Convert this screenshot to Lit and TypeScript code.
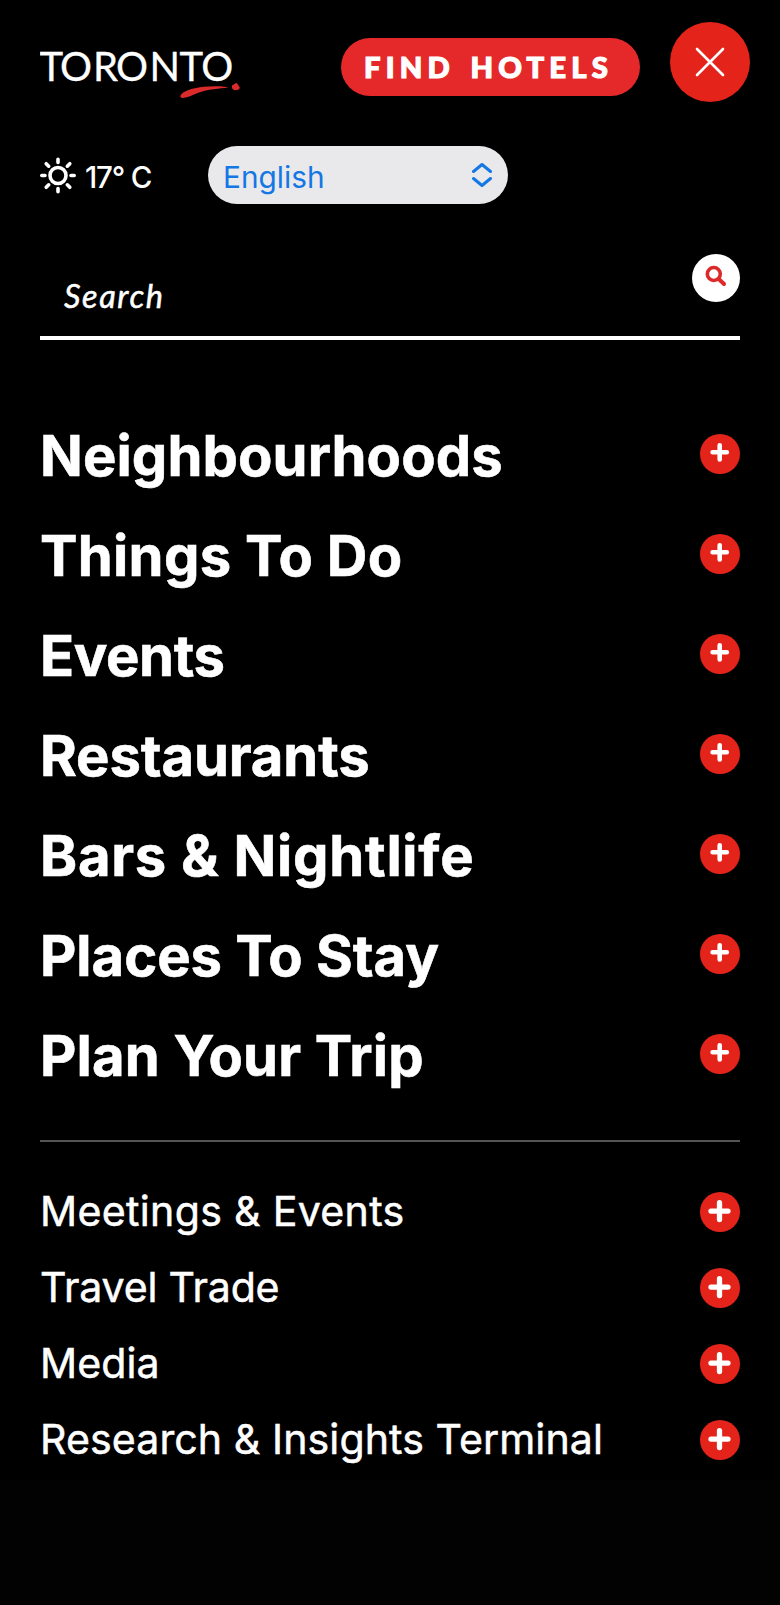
import { LitElement, html, css } from "lit";

type Entry = { label: string; spacing: number };

const primary: Entry[] = [
  { label: "Neighbourhoods", spacing: 0.1 },
  { label: "Things To Do", spacing: 0.3 },
  { label: "Events", spacing: -0.4 },
  { label: "Restaurants", spacing: -0.13 },
  { label: "Bars & Nightlife", spacing: 0.72 },
  { label: "Places To Stay", spacing: -0.04 },
  { label: "Plan Your Trip", spacing: 0.17 },
];

const secondary: Entry[] = [
  { label: "Meetings & Events", spacing: 0.32 },
  { label: "Travel Trade", spacing: -0.2 },
  { label: "Media", spacing: 0.1 },
  { label: "Research & Insights Terminal", spacing: 0.09 },
];

class ExpandButton extends LitElement {
  static properties = { large: { type: Boolean } };
  declare large: boolean;
  static styles = css`
    :host { display: block; flex: none; width: 40px; height: 40px; }
    svg { display: block; }
  `;
  render() {
    return html`<svg width="40" height="40" viewBox="0 0 40 40">
      <circle cx="20" cy="20" r="20" fill="#e4241b" />
      ${this.large
        ? html`<svg><path d="M19.5 10.6v17M11 19.1h17" stroke="#fff" stroke-width="5.3" stroke-linecap="round" /></svg>`
        : html`<svg><path d="M19.7 11.200v14.200M12.6 18.3h14.2" stroke="#fff" stroke-width="4.6" stroke-linecap="round" /></svg>`}
    </svg>`;
  }
}
customElements.define("expand-button", ExpandButton);

class AppRoot extends LitElement {
  static styles = css`
    :host {
      display: block;
      box-sizing: border-box;
      height: 1605px;
      overflow: hidden;
      background: #020202;
      color: #fff;
      font-family: Inter, "Liberation Sans", sans-serif;
    }
    .menu { box-sizing: border-box; height: 1480px; background: #000; padding: 22px 40px 0; }
    header { display: flex; height: 80px; margin-right: -10px; }
    .logo { display: block; width: 210px; height: 74px; margin-top: 8px; }
    .logo text { font: 400 40px Lato, sans-serif; fill: #fff; stroke: #fff; stroke-width: 0.3px; }
    .hotels {
      box-sizing: border-box; width: 299px; height: 58px; margin: 16px 0 0 91px;
      padding-left: 23px; border-radius: 29px; background: #e5292b;
      font: 900 29.2px/58px Lato, sans-serif; letter-spacing: 5.2px; word-spacing: 3.4px; white-space: nowrap;
      -webkit-text-stroke: 1.2px #fff;
    }
    .close { display: block; margin-left: auto; }
    .tools { display: flex; align-items: center; height: 58px; margin-top: 44px; }
    .sun { display: block; margin: 0 0 0 -1px; }
    .temp { width: 123px; margin-left: 8px; padding-top: 4px; font-size: 29.5px; font-weight: 500; line-height: 58px; letter-spacing: -1.2px; white-space: nowrap; }
    .language {
      box-sizing: border-box; display: flex; align-items: center; justify-content: space-between;
      width: 300px; height: 58px; padding: 0 16px 0 15px; border-radius: 29px;
      background: #e9e9eb; color: #1477e4; font-size: 29.8px; line-height: 58px;
    }
    .language span { padding-top: 4px; }
    .search { display: flex; justify-content: space-between; height: 82px; margin-top: 50px; border-bottom: 4px solid #fff; }
    .search span { padding-left: 24px; font: italic 400 32.5px/84px Lato, sans-serif; letter-spacing: 1.6px; -webkit-text-stroke: 0.5px #fff; }
    .search svg { display: block; }
    .primary { margin-top: 64px; display: flex; flex-direction: column; }
    .item { display: flex; align-items: center; justify-content: space-between; white-space: nowrap; }
    .primary .item { height: 100px; font-size: 56.2px; font-weight: 700; line-height: 100px; -webkit-text-stroke: 0.6px #fff; }
    .primary span { padding-top: 3px; }
    .secondary { margin-top: 36px; padding-top: 32px; border-top: 2px solid #555; }
    .secondary .item { height: 76px; font-size: 41.1px; font-weight: 400; line-height: 74px; -webkit-text-stroke: 0.5px #fff; }
    .secondary span { padding-bottom: 2px; }
  `;

  item(e: Entry, large: boolean) {
    return html`<div class="item">
      <span style="letter-spacing:${e.spacing}px">${e.label}</span>
      <expand-button ?large=${large}></expand-button>
    </div>`;
  }

  render() {
    return html`<div class="menu">
      <header>
        <svg class="logo" viewBox="40 30 210 74">
          <text x="39.5 60 93 116 149.5 179.5 201.3" y="81">TORONTO</text>
          <path d="M180.5 95.500C183 91 193 88 204 86.800C213 86 222 86 228.500 87.500C220 88.500 207 89.500 199 92.500C193 95 188 97.500 183 98C181 98.300 180 97 180.500 95.500Z" fill="#dc2a2b" />
          <path d="M232 85.500l4.500-2.700 3.200 4.200-.5 2.500-5 .7-2.200-2z" fill="#dc2a2b" />
        </svg>
        <div class="hotels">FIND HOTELS</div>
        <svg class="close" width="80" height="80" viewBox="0 0 80 80">
          <circle cx="40" cy="40" r="40" fill="#e4241b" />
          <path d="M27 27l26 26M53 27l-26 26" stroke="#fff" stroke-width="2.6" stroke-linecap="round" />
        </svg>
      </header>

      <div class="tools">
        <svg class="sun" width="38" height="38" viewBox="-19 -19.500 38 38" fill="none" stroke="#fff" stroke-width="3.600" stroke-linecap="round">
          <circle r="8" />
          <path d="M0-16.200v3.200M0 13v3.200M-16.200 0h3.200M13 0h3.200M-11.800-11.800l2.500 2.500M11.800-11.800l-2.500 2.500M-11.800 11.800l2.500-2.500M11.800 11.800l-2.500-2.500" />
        </svg>
        <div class="temp">17° C</div>
        <div class="language">
          <span>English</span>
          <svg width="20" height="24" viewBox="0 0 20 24" fill="none" stroke="#1477e4" stroke-width="3" stroke-linecap="round" stroke-linejoin="round">
            <path d="M1.500 8.500L10 1.500l8.500 7M1.500 15.500l8.500 7 8.500-7" />
          </svg>
        </div>
      </div>

      <div class="search">
        <span>Search</span>
        <svg width="48" height="48" viewBox="0 0 48 48">
          <circle cx="24" cy="24" r="24" fill="#fff" />
          <circle cx="21.800" cy="20" r="6.500" fill="none" stroke="#dc2a2b" stroke-width="3.600" />
          <path d="M27 25.200l5 4.800" stroke="#dc2a2b" stroke-width="4" stroke-linecap="round" />
        </svg>
      </div>

      <nav class="primary">${primary.map((e) => this.item(e, false))}</nav>
      <nav class="secondary">${secondary.map((e) => this.item(e, true))}</nav>
    </div>`;
  }
}
customElements.define("app-root", AppRoot);
